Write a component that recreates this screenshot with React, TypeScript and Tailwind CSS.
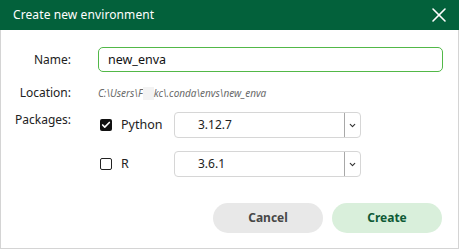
import { X, ChevronDown, Check } from "lucide-react";

const font = { fontFamily: '"Noto Sans", "Open Sans", sans-serif' };

function VersionSelect({ value }: { value: string }) {
  return (
    <div className="flex h-[26px] w-[187px] items-center rounded-[4px] border border-[#d6d6d6] bg-white">
      <span className="flex-1 pl-[23px] text-[12px] text-[#222]">{value}</span>
      <span className="h-full w-px bg-[#a8a8a8]" />
      <span className="flex w-[15px] items-center justify-center">
        <ChevronDown className="h-[9px] w-[9px] text-[#333]" strokeWidth={3} />
      </span>
    </div>
  );
}

function PackageRow({ name, version, checked }: { name: string; version: string; checked: boolean }) {
  return (
    <div className="flex items-center">
      <div className="flex w-[76px] items-center">
        {checked ? (
          <span className="ml-[2px] flex h-[12px] w-[12px] items-center justify-center rounded-[2px] bg-[#111]">
            <Check className="h-[10px] w-[10px] text-white" strokeWidth={4} />
          </span>
        ) : (
          <span className="ml-[2px] h-[12px] w-[12px] rounded-[2px] border-[1.5px] border-[#222]" />
        )}
        <span className="ml-[9px] text-[12.5px] text-[#222]">{name}</span>
      </div>
      <VersionSelect value={version} />
    </div>
  );
}

export default function App() {
  return (
    <div className="h-[249px] w-[460px] bg-white" style={font}>
      <div className="flex h-full w-[459px] flex-col border-x border-b border-[#d4d4d4]">
        <div className="-mx-px flex h-[30px] items-center justify-between bg-[#03613b] pl-[13px] pr-[8px]">
          <span className="text-[12px] tracking-[0.1px] text-white">Create new environment</span>
          <X className="h-[24px] w-[24px] text-white" strokeWidth={1.6} />
        </div>

        <div className="grid grid-cols-[70px_1fr] items-center gap-x-[27px] pr-[15px] pt-[17px]">
          <span className="text-right text-[12px] text-[#222]">Name:</span>
          <input
            defaultValue="new_enva"
            className="h-[25px] rounded-[5px] border border-[#52b848] px-[9px] text-[12.5px] text-[#111] outline-none"
          />

          <span className="mt-[12px] text-right text-[12px] text-[#222]">Location:</span>
          <span className="mt-[12px] flex items-center text-[10px] italic text-[#6a6a6a]">
            C:\Users\F
            <span className="inline-block h-[13px] w-[11px] bg-[#f3f3f3]" />
            kc\.conda\envs\new_enva
          </span>

          <span className="self-start pt-[9px] text-right text-[12px] text-[#222]">Packages:</span>
          <div className="mt-[10px] flex flex-col gap-[13px]">
            <PackageRow name="Python" version="3.12.7" checked />
            <PackageRow name="R" version="3.6.1" checked={false} />
          </div>
        </div>

        <div className="mt-[26px] flex justify-end gap-[9px] pr-[16px]">
          <button className="h-[30px] w-[110px] rounded-full bg-[#e8e8e8] text-[12px] font-bold text-[#474747]">
            Cancel
          </button>
          <button className="h-[30px] w-[110px] rounded-full bg-[#d9efdb] text-[12px] font-bold text-[#0e5a36]">
            Create
          </button>
        </div>
      </div>
    </div>
  );
}
